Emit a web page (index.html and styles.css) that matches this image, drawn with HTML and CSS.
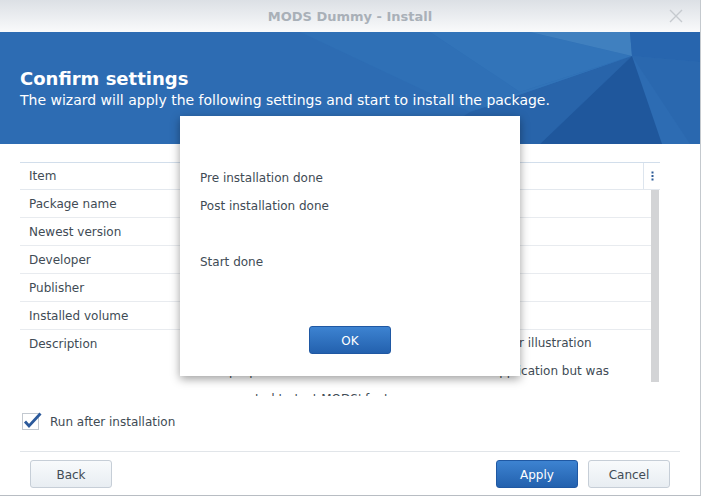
FILE: index.html
```html
<!DOCTYPE html>
<html>
<head>
<meta charset="utf-8">
<title>MODS Dummy - Install</title>
<link rel="stylesheet" href="styles.css">
</head>
<body>
<div class="window">
  <div class="titlebar">
    <span class="title">MODS Dummy - Install</span>
    <svg class="close" width="14" height="14" viewBox="0 0 14 14"><path d="M1 1 L13 13 M13 1 L1 13" stroke="#c6cacf" stroke-width="1.4" fill="none"/></svg>
  </div>
  <div class="banner">
    <svg class="banner-bg" width="700" height="112" viewBox="0 0 700 112">
      <rect width="700" height="112" fill="#2d6cb3"/>
      <polygon points="300,0 430,0 520,60 470,80" fill="#2f70b6"/>
      <polygon points="430,0 530,0 632,24 520,60" fill="#3274b9"/>
      <polygon points="530,0 630,0 632,24" fill="#4080bf"/>
      <polygon points="630,0 700,0 700,30 632,24" fill="#2765ae"/>
      <polygon points="632,24 700,30 700,112 690,112" fill="#2a68af"/>
      <polygon points="420,112 540,112 632,24 470,80" fill="#2864aa"/>
      <polygon points="632,24 662,112 540,112" fill="#1f579c"/>
      <polygon points="520,60 632,24 470,80" fill="#3173b8"/>
    </svg>
    <h1 class="banner-title">Confirm settings</h1>
    <p class="banner-sub">The wizard will apply the following settings and start to install the package.</p>
  </div>
  <div class="content">
    <div class="table">
      <div class="thead">
        <div class="cell c1">Item</div>
        <div class="cell c2"></div>
        <div class="menu">
          <svg width="3" height="10" viewBox="0 0 3 10"><rect x="0.5" y="0.5" width="2" height="2" fill="#2d5c98"/><rect x="0.5" y="4" width="2" height="2" fill="#2d5c98"/><rect x="0.5" y="7.5" width="2" height="2" fill="#2d5c98"/></svg>
        </div>
      </div>
      <div class="tbody">
        <div class="rows">
          <div class="row"><div class="cell c1">Package name</div><div class="cell c2"></div></div>
          <div class="row"><div class="cell c1">Newest version</div><div class="cell c2"></div></div>
          <div class="row"><div class="cell c1">Developer</div><div class="cell c2"></div></div>
          <div class="row"><div class="cell c1">Publisher</div><div class="cell c2"></div></div>
          <div class="row"><div class="cell c1">Installed volume</div><div class="cell c2"></div></div>
          <div class="row desc"><div class="cell c1">Description</div><div class="cell c2 multi">This package is only a dummy package made for illustration<br>purposes. It is not intended to be an actual application but was<br>created to test MODS' features.</div></div>
        </div>
        <div class="scrollbar"><div class="thumb"></div></div>
      </div>
    </div>
    <label class="option">
      <svg class="check" width="20" height="19" viewBox="0 0 20 19"><rect x="0.5" y="1.5" width="16" height="16" fill="#fff" stroke="#c3c9d0"/><path d="M3 9.5 L7 14 L18.5 1.5" stroke="#2c5a9b" stroke-width="2.8" fill="none" stroke-linejoin="miter"/></svg>
      <span>Run after installation</span>
    </label>
    <div class="footer">
      <button class="btn">Back</button>
      <div class="right">
        <button class="btn primary">Apply</button>
        <button class="btn">Cancel</button>
      </div>
    </div>
  </div>
  <div class="modal">
    <div class="modal-lines">
      <div class="line">Pre installation done</div>
      <div class="line">Post installation done</div>
      <div class="line"></div>
      <div class="line">Start done</div>
    </div>
    <div class="modal-actions">
      <button class="btn primary">OK</button>
    </div>
  </div>
</div>
</body>
</html>
```
FILE: styles.css
```css
* { box-sizing: border-box; }
html, body { margin: 0; padding: 0; background: #fff; }
body {
  font-family: "DejaVu Sans", Verdana, sans-serif;
  font-size: 12px;
  color: #414b55;
}
.window {
  position: relative;
  width: 701px;
  height: 496px;
  border-right: 1px solid #c4c9ce;
  border-bottom: 1px solid #b8bdc3;
  overflow: hidden;
  background: #fff;
}
.titlebar {
  height: 32px;
  background: linear-gradient(#dce0e5, #f9fafb);
  display: flex;
  align-items: center;
  justify-content: center;
  position: relative;
}
.title {
  font-size: 13px;
  font-weight: bold;
  color: #a9b0b8;
}
.close {
  position: absolute;
  right: 17px;
  top: 9px;
}
.banner {
  position: relative;
  height: 112px;
  padding: 36px 20px 0;
  color: #fff;
}
.banner-bg {
  position: absolute;
  left: 0;
  top: 0;
  z-index: 0;
}
.banner-title, .banner-sub {
  position: relative;
  z-index: 1;
  margin: 0;
}
.banner-title {
  font-size: 18px;
  font-weight: bold;
  line-height: 22px;
}
.banner-sub {
  font-size: 14px;
  line-height: 20px;
}
.content {
  padding: 18px 20px 0;
}
.table {
  width: 640px;
}
.thead {
  display: flex;
  height: 28px;
  border-top: 1px solid #d2deeb;
  border-bottom: 1px solid #e3e8ee;
  align-items: stretch;
}
.cell {
  padding-left: 9px;
  display: flex;
  align-items: center;
  white-space: nowrap;
}
.c1 { width: 200px; flex: none; }
.c2 { flex: 1; }
.menu {
  width: 17px;
  flex: none;
  border-left: 1px solid #dde5ee;
  display: flex;
  align-items: center;
  justify-content: center;
  padding-left: 1px;
}
.tbody {
  display: flex;
  height: 206px;
  overflow: hidden;
}
.rows {
  width: 631px;
  flex: none;
}
.row {
  display: flex;
  height: 28px;
  border-bottom: 1px solid #e8ebef;
}
.row.desc {
  height: auto;
  border-bottom: none;
  align-items: flex-start;
}
.row.desc .c1 { height: 27px; }
.multi {
  display: block;
  line-height: 28px;
  margin-top: -1px;
}
.scrollbar {
  width: 9px;
  flex: none;
}
.thumb {
  width: 8px;
  height: 192px;
  background: #d3d4d6;
}
.option {
  display: flex;
  align-items: center;
  gap: 8px;
  margin: 16px 0 0 2px;
  height: 19px;
}
.check { display: block; }
.footer {
  margin-top: 20px;
  border-top: 1px solid #e1e5e9;
  padding: 8px 10px 0;
  display: flex;
  justify-content: space-between;
}
.right {
  display: flex;
  gap: 10px;
}
.btn {
  width: 82px;
  height: 28px;
  border: 1px solid #c6ced7;
  border-radius: 3px;
  background: linear-gradient(#f8fafc, #e8edf2);
  font-family: "DejaVu Sans", Verdana, sans-serif;
  font-size: 12px;
  color: #414b55;
  padding: 1px 0 0;
}
.btn.primary {
  border-color: #1f58a3;
  background: linear-gradient(#3d83d1, #2361ae);
  color: #fff;
}
.modal {
  position: absolute;
  left: 180px;
  top: 116px;
  width: 340px;
  height: 260px;
  background: #fff;
  box-shadow: 0 3px 9px rgba(0, 0, 0, 0.38);
  padding: 48px 20px 0;
  display: flex;
  flex-direction: column;
}
.line {
  height: 28px;
  line-height: 28px;
}
.modal-actions {
  margin-top: 50px;
  display: flex;
  justify-content: center;
}
```
